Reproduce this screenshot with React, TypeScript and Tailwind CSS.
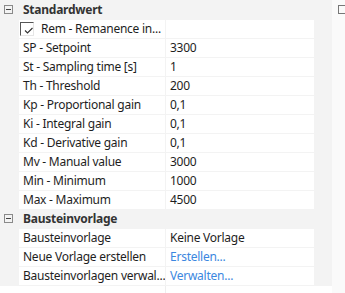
import React from "react";

interface Row {
  label: string;
  value: string;
  link?: boolean;
  check?: boolean;
}

const STANDARD: Row[] = [
  { label: "Rem - Remanence in...", value: "", check: true },
  { label: "SP - Setpoint", value: "3300" },
  { label: "St - Sampling time [s]", value: "1" },
  { label: "Th - Threshold", value: "200" },
  { label: "Kp - Proportional gain", value: "0,1" },
  { label: "Ki - Integral gain", value: "0,1" },
  { label: "Kd - Derivative gain", value: "0,1" },
  { label: "Mv - Manual value", value: "3000" },
  { label: "Min - Minimum", value: "1000" },
  { label: "Max - Maximum", value: "4500" },
];

const VORLAGE: Row[] = [
  { label: "Bausteinvorlage", value: "Keine Vorlage" },
  { label: "Neue Vorlage erstellen", value: "Erstellen...", link: true },
  { label: "Bausteinvorlagen verwal...", value: "Verwalten...", link: true },
];

function Collapse() {
  return (
    <div className="w-[9px] h-[9px] border border-[#8a8a8a] flex items-center justify-center">
      <div className="w-[5px] h-px bg-[#444]" />
    </div>
  );
}

function Category({ title }: { title: string }) {
  return (
    <div className="h-[19px] flex items-center">
      <div className="w-[19px] pl-[4px] flex items-center">
        <Collapse />
      </div>
      <span className="pl-[4px] font-bold text-[#333]">{title}</span>
    </div>
  );
}

function PropRow({ row }: { row: Row }) {
  return (
    <div className="h-[19px] flex pt-px">
      <div className="w-[19px]" />
      <div className="w-[146px] bg-white flex items-center pl-[4px] whitespace-nowrap overflow-hidden">
        {row.check && (
          <div className="w-[14px] h-[14px] -ml-[3px] mr-[7px] border-t border-l border-[#555] border-r border-b border-r-[#e6e6e6] border-b-[#e6e6e6] relative">
            <svg
              width="10"
              height="8"
              viewBox="0 0 10 8"
              className="absolute left-[3px] top-[4px]"
            >
              <path d="M1 3.5 L3.5 6 L8.5 1" fill="none" stroke="#333" strokeWidth="1.1" />
            </svg>
          </div>
        )}
        {row.label}
      </div>
      <div className="w-px" />
      <div
        className={`w-[148px] bg-white flex items-center pl-[4px] whitespace-nowrap ${
          row.link ? "text-[#3c87e0]" : ""
        }`}
      >
        {row.value}
      </div>
    </div>
  );
}

export default function App() {
  return (
    <div
      className="w-[345px] h-[293px] flex bg-white text-[12px] tracking-[-0.25px] text-[#1e1e1e] overflow-hidden"
      style={{ fontFamily: '"Noto Sans", "Open Sans", sans-serif' }}
    >
      <div className="w-[336px] flex flex-col bg-[#f3f3f3]">
        <Category title="Standardwert" />
        {STANDARD.map((r) => (
          <PropRow key={r.label} row={r} />
        ))}
        <Category title="Bausteinvorlage" />
        {VORLAGE.map((r) => (
          <PropRow key={r.label} row={r} />
        ))}
        <div className="flex-1 flex pt-px">
          <div className="w-[332px] bg-white flex">
            <div className="w-[165px]" />
            <div className="w-px bg-[#eeeeee]" />
          </div>
        </div>
      </div>
      <div className="w-px bg-[#d6d6d6]" />
      <div className="flex-1 bg-[#fafafa] pt-[5px] pl-[6px]">
        <div className="w-[8px] h-[9px] border border-[#777]" />
      </div>
    </div>
  );
}
